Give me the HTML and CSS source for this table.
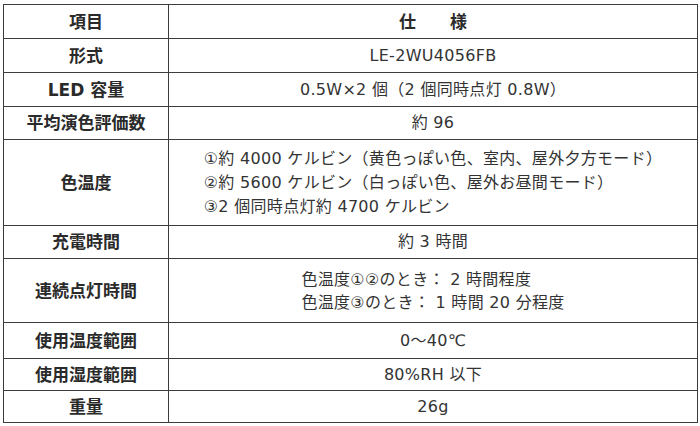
FILE: index.html
```html
<!DOCTYPE html>
<html lang="ja">
<head>
<meta charset="utf-8">
<link rel="stylesheet" href="styles.css">
</head>
<body>
<table class="spec">
  <tr class="h34"><th class="key">項目</th><th class="val head">仕　　様</th></tr>
  <tr class="h34"><th class="key">形式</th><td class="val">LE-2WU4056FB</td></tr>
  <tr class="h34"><th class="key">LED 容量</th><td class="val">0.5W×2 個（2 個同時点灯 0.8W）</td></tr>
  <tr class="h33"><th class="key">平均演色評価数</th><td class="val">約 96</td></tr>
  <tr class="h86"><th class="key">色温度</th><td class="val"><div class="block lh24">①約 4000 ケルビン（黄色っぽい色、室内、屋外夕方モード）<br>②約 5600 ケルビン（白っぽい色、屋外お昼間モード）<br>③2 個同時点灯約 4700 ケルビン</div></td></tr>
  <tr class="h33"><th class="key">充電時間</th><td class="val">約 3 時間</td></tr>
  <tr class="h64"><th class="key">連続点灯時間</th><td class="val"><div class="block lh23">色温度①②のとき： 2 時間程度<br>色温度③のとき： 1 時間 20 分程度</div></td></tr>
  <tr class="h36"><th class="key">使用温度範囲</th><td class="val">0～40℃</td></tr>
  <tr class="h32"><th class="key">使用湿度範囲</th><td class="val">80%RH 以下</td></tr>
  <tr class="h32"><th class="key">重量</th><td class="val">26g</td></tr>
</table>
</body>
</html>
```
FILE: styles.css
```css
html, body {
  margin: 0;
  padding: 0;
  background: #ffffff;
}
body {
  padding: 4px 0 0 3px;
  font-family: "DejaVu Sans", "Noto Sans CJK JP", sans-serif;
  color: #333333;
}
.spec {
  border-collapse: collapse;
  width: 695px;
  table-layout: fixed;
}
.spec th, .spec td {
  border: 1px solid #3c3c3c;
  padding: 0;
  text-align: center;
  vertical-align: middle;
  font-size: 16px;
  line-height: 20px;
}
.spec .key {
  width: 164px;
  font-weight: bold;
  font-size: 17px;
  color: #2a2a2a;
}
.spec .val {
  font-weight: normal;
  letter-spacing: 0.3px;
}
.spec .val.head {
  font-weight: bold;
  font-size: 17px;
  letter-spacing: 0;
  color: #2a2a2a;
}
.block {
  display: inline-block;
  text-align: left;
}
.lh24 { line-height: 24px; }
.lh23 { line-height: 23px; }
.h34 { height: 34px; }
.h33 { height: 33px; }
.h36 { height: 36px; }
.h32 { height: 32px; }
.h86 { height: 86px; }
.h64 { height: 64px; }
```
